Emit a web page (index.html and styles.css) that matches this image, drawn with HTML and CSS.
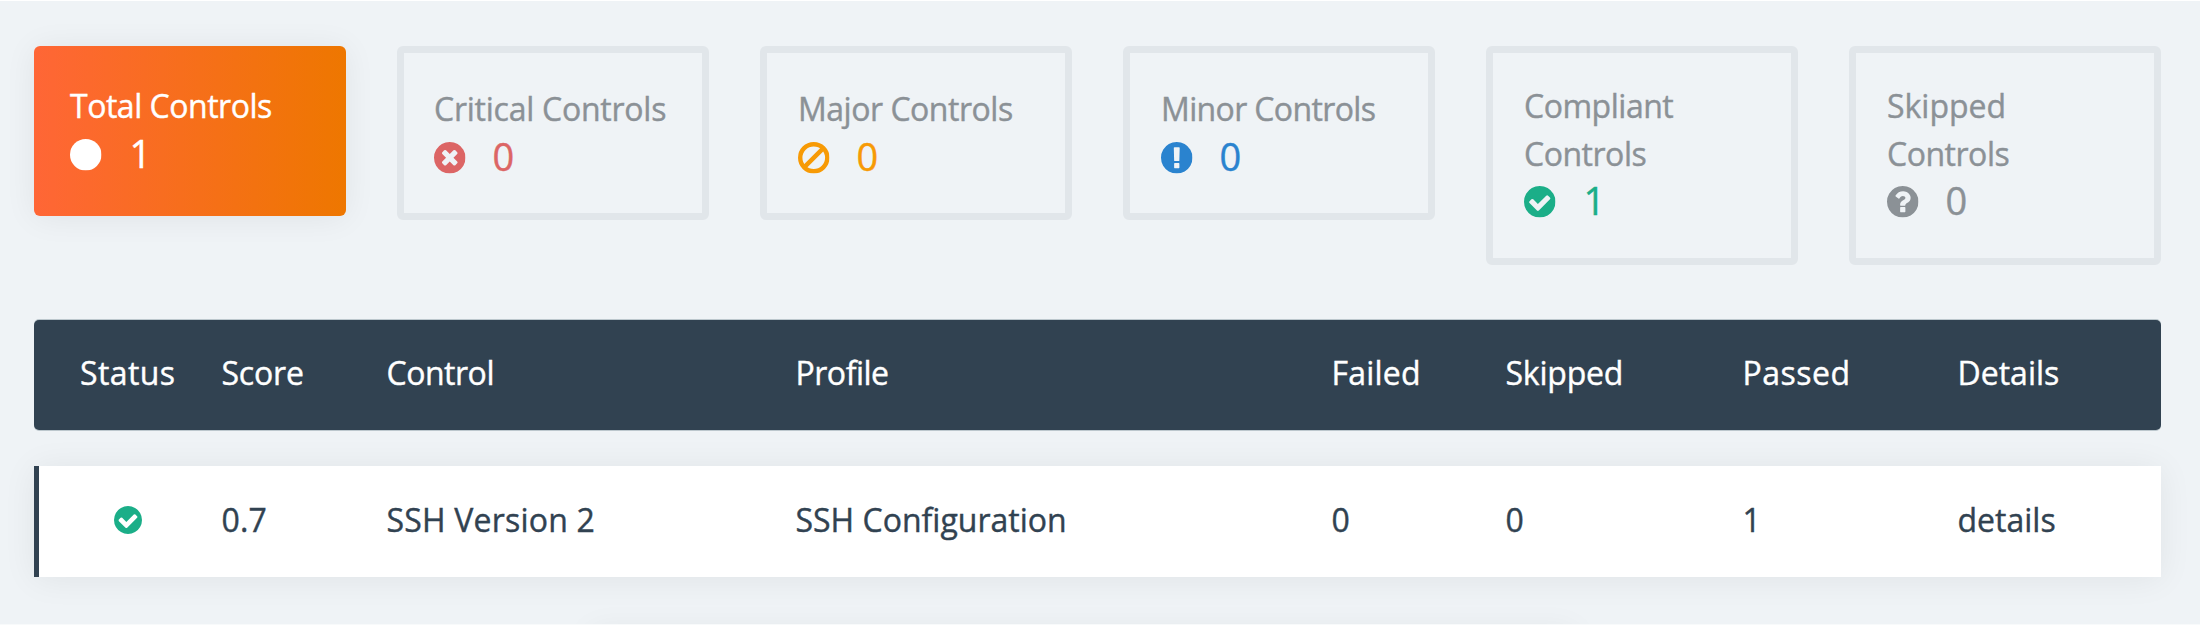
FILE: index.html
```
<!DOCTYPE html>
<html lang="en">
<head>
<meta charset="utf-8">
<title>Controls</title>
<link rel="stylesheet" href="styles.css">
</head>
<body>
<svg class="sprite" aria-hidden="true">
  <symbol id="i-circle" viewBox="0 0 1536 1536"><circle cx="768" cy="768" r="768"/></symbol>
  <symbol id="i-times" viewBox="128 128 1536 1536"><path d="M1277 1122q0-26-19-45l-181-181 181-181q19-19 19-45 0-27-19-46l-90-90q-19-19-46-19-26 0-45 19l-181 181-181-181q-19-19-45-19-27 0-46 19l-90 90q-19 19-19 46 0 26 19 45l181 181-181 181q-19 19-19 45 0 27 19 46l90 90q19 19 46 19 26 0 45-19l181-181 181 181q19 19 45 19 27 0 46-19l90-90q19-19 19-46zm387-226q0 209-103 385.5t-279.5 279.5-385.5 103-385.5-103-279.5-279.5-103-385.5 103-385.5 279.5-279.5 385.5-103 385.5 103 279.5 279.5 103 385.5z"/></symbol>
  <symbol id="i-ban" viewBox="0 0 1536 1536"><g fill="none" stroke="currentColor" stroke-width="215"><circle cx="768" cy="768" r="660"/><path d="M310 1226L1226 310"/></g></symbol>
  <symbol id="i-exclamation" viewBox="128 128 1536 1536"><path d="M896 128q209 0 385.5 103t279.5 279.5 103 385.5-103 385.5-279.5 279.5-385.5 103-385.5-103-279.5-279.5-103-385.5 103-385.5 279.5-279.5 385.5-103zm128 1247v-190q0-14-9-23.5t-22-9.5h-192q-13 0-23 10t-10 23v190q0 13 10 23t23 10h192q13 0 22-9.5t9-23.5zm-2-344l18-621q0-12-10-18-10-8-24-8h-220q-14 0-24 8-10 6-10 18l17 621q0 10 10 17.5t24 7.5h185q14 0 23.5-7.5t10.5-17.5z"/></symbol>
  <symbol id="i-check" viewBox="128 128 1536 1536"><path d="M1412 734q0-28-18-46l-91-90q-19-19-45-19t-45 19l-408 407-226-226q-19-19-45-19t-45 19l-91 90q-18 18-18 46 0 27 18 45l362 362q19 19 45 19 27 0 46-19l543-543q18-18 18-45zm252 162q0 209-103 385.5t-279.5 279.5-385.5 103-385.5-103-279.5-279.5-103-385.5 103-385.5 279.5-279.5 385.5-103 385.5 103 279.5 279.5 103 385.5z"/></symbol>
  <symbol id="i-question" viewBox="128 128 1536 1536"><path d="M1024 1376v-192q0-14-9-23t-23-9h-192q-14 0-23 9t-9 23v192q0 14 9 23t23 9h192q14 0 23-9t9-23zm256-672q0-88-55.5-163t-138.5-116-170-41q-243 0-371 213-15 24 8 42l132 100q7 6 19 6 16 0 25-12 53-68 86-92 34-24 86-24 48 0 85.5 26t37.5 59q0 38-20 61t-68 45q-63 28-115.5 86.5t-52.5 125.5v36q0 14 9 23t23 9h192q14 0 23-9t9-23q0-19 21.5-49.5t54.5-49.5q32-18 49-28.5t46-35 44.5-48 28-60.5 12.5-81zm384 192q0 209-103 385.5t-279.5 279.5-385.5 103-385.5-103-279.5-279.5-103-385.5 103-385.5 279.5-279.5 385.5-103 385.5 103 279.5 279.5 103 385.5z"/></symbol>
</svg>
<main class="page">
  <section class="cards">
    <div class="card active">
      <div class="title t-narrow">Total Controls</div>
      <div class="count"><svg class="icon"><use href="#i-circle"/></svg><span>1</span></div>
    </div>
    <div class="card critical">
      <div class="title t-critical">Critical Controls</div>
      <div class="count"><svg class="icon"><use href="#i-times"/></svg><span>0</span></div>
    </div>
    <div class="card major">
      <div class="title t-narrow">Major Controls</div>
      <div class="count"><svg class="icon"><use href="#i-ban"/></svg><span>0</span></div>
    </div>
    <div class="card minor">
      <div class="title t-minor">Minor Controls</div>
      <div class="count"><svg class="icon"><use href="#i-exclamation"/></svg><span>0</span></div>
    </div>
    <div class="card tall compliant">
      <div class="title t-narrow">Compliant<br>Controls</div>
      <div class="count"><svg class="icon"><use href="#i-check"/></svg><span>1</span></div>
    </div>
    <div class="card tall skipped">
      <div class="title"><span>Skipped</span><br><span class="t-narrow">Controls</span></div>
      <div class="count"><svg class="icon"><use href="#i-question"/></svg><span>0</span></div>
    </div>
  </section>
  <section class="table">
    <div class="row head">
      <span class="h-status">Status</span><span class="h-tight">Score</span><span class="t-narrow">Control</span><span class="t-narrow">Profile</span><span class="h-failed">Failed</span><span class="h-tight">Skipped</span><span class="h-passed">Passed</span><span>Details</span>
    </div>
    <div class="row item">
      <span class="status"><svg class="icon small"><use href="#i-check"/></svg></span><span class="t-wide">0.7</span><span class="t-wide">SSH Version 2</span><span>SSH Configuration</span><span>0</span><span>0</span><span>1</span><span>details</span>
    </div>
  </section>
  <div class="panel"></div>
</main>
</body>
</html>
```
FILE: styles.css
```
* { box-sizing: border-box; }

body {
  margin: 0;
  background: #eff3f6;
  color: #314251;
  font: 32px/47.5px "Open Sans", "Noto Sans", sans-serif;
  -webkit-text-stroke: .4px currentColor;
}

.sprite { display: none; }

.page {
  height: 625px;
  overflow: hidden;
  padding: 45px 39px 0 34px;
  border-top: 1px solid #fff;
  border-bottom: 1px solid #f8fafb;
}

.cards {
  display: grid;
  grid-template-columns: repeat(6, minmax(0, 1fr));
  align-items: start;
  gap: 51px;
  height: 219px;
}

.card {
  height: 174px;
  padding: 32px 0 0 30px;
  border: 7px solid #e1e6ea;
  border-radius: 6px;
  color: #8b9196;
}

.card.active {
  height: 170px;
  padding: 36px 0 0 36px;
  border: 0;
  color: #fff;
  background: linear-gradient(90deg, #ff6636, #ee7700);
  box-shadow: 0 2px 32px rgba(0, 0, 0, .065);
}

.card.major, .card.minor { padding-left: 31px; }
.card.tall { height: 219px; padding: 29px 0 0 31px; }

.title { white-space: nowrap; }

.count {
  display: flex;
  align-items: center;
  gap: 27px;
  height: 47px;
  font-size: 38px;
  line-height: 47px;
}

.active .count, .compliant .count { gap: 28px; }

.icon {
  display: block;
  width: 31.5px;
  height: 31.5px;
  margin-top: 3px;
  fill: currentColor;
  overflow: visible;
}

.critical .count { color: #dc6565; }
.major .count { color: #f79a05; }
.minor .count { color: #2a83cf; }
.compliant .count, .status { color: #1bae88; }

.t-narrow { letter-spacing: -.48px; }
.t-critical { letter-spacing: -.25px; }
.t-minor { letter-spacing: -.63px; }
.t-wide { letter-spacing: .2px; }
.h-status { letter-spacing: .4px; }
.h-failed { letter-spacing: .2px; }
.h-passed { letter-spacing: .5px; }
.h-tight { letter-spacing: -.2px; }

.table {
  display: flex;
  flex-direction: column;
  gap: 36px;
  margin-top: 55px;
}

.row {
  display: grid;
  grid-template-columns: 141.5px 165px 409px 536px 174px 237px 215px 1fr;
  align-items: center;
}

.head {
  height: 110px;
  padding: 0 0 5px 46px;
  border-radius: 5px;
  color: #fff;
  background: #314251;
  box-shadow: 0 -1px #bcc7cd, 0 1px #bcc7cd;
  font-weight: 500;
}

.item {
  height: 111px;
  padding: 0 0 4px 41px;
  border-left: 5px solid #314251;
  background: #fff;
  box-shadow: 0 2px 32px rgba(0, 0, 0, .065);
}

.icon.small {
  width: 28px;
  height: 28px;
  margin: 0 0 0 34px;
}

.panel {
  width: 985px;
  height: 60px;
  margin: 51px 0 0 556px;
  box-shadow: 0 2px 32px rgba(0, 0, 0, .06);
}
```
